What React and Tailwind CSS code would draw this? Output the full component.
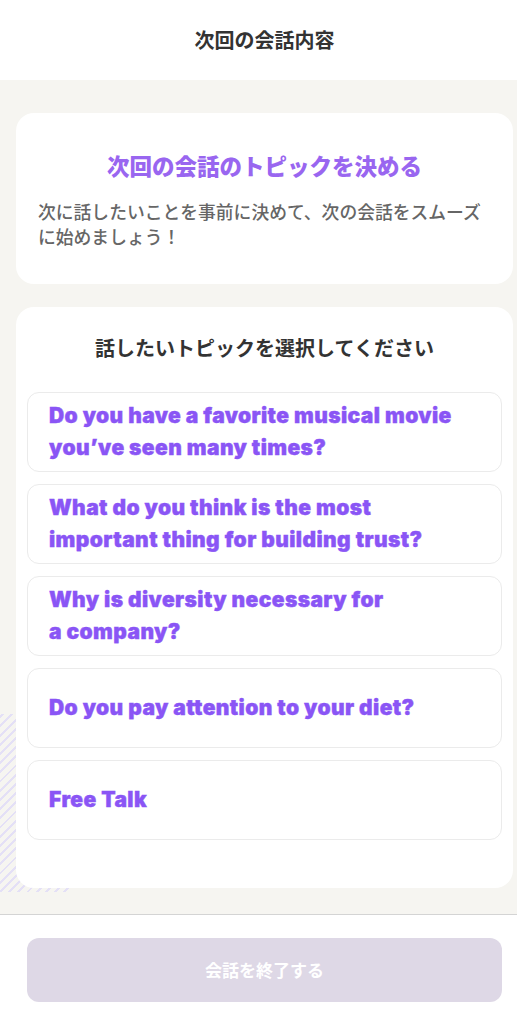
import React from 'react';

const topics = [
  ['Do you have a favorite musical movie', 'you’ve seen many times?'],
  ['What do you think is the most', 'important thing for building trust?'],
  ['Why is diversity necessary for', 'a company?'],
  ['Do you pay attention to your diet?'],
  ['Free Talk'],
];

const jp = { fontFamily: '"Noto Sans CJK JP", "Noto Sans", sans-serif' };
const en = { fontFamily: 'Inter, "Noto Sans CJK JP", sans-serif' };

const TopicItem = ({ lines }) => (
  <button
    type="button"
    className="h-[80px] w-full rounded-[12px] border border-[#ebebeb] bg-white px-[21px] text-left"
  >
    {lines.map((line, i) => (
      <span
        key={i}
        className="block text-[21px] font-black leading-[32px] tracking-[0.4px] text-[#8a55f5] [-webkit-text-stroke:0.4px_#8a55f5]"
        style={en}
      >
        {line}
      </span>
    ))}
  </button>
);

export default function App() {
  return (
    <div className="w-[517px] overflow-hidden bg-white" style={jp}>
      {/* screen is a little wider than the capture, right edge is cut off */}
      <div className="flex min-h-[1024px] w-[529px] flex-col bg-white">
        <header className="flex h-[80px] items-center justify-center bg-white">
          <h1 className="text-[20px] font-bold text-[#333]">次回の会話内容</h1>
        </header>

        <main className="relative flex-1 overflow-hidden bg-[#f6f5f1] px-[16px] pt-[33px] pb-[26px]">
          <div className="absolute left-[-20px] top-[634px] h-[178px] w-[92px] bg-[repeating-linear-gradient(-45deg,transparent_0px,transparent_4.5px,#e4e0f6_4.5px,#e4e0f6_6.5px)]" />

          <section className="relative rounded-[18px] bg-white px-[22px] pt-[36px] pb-[35px]">
            <h2 className="text-center text-[22.5px] font-black leading-[32px] text-[#9966f0]">
              次回の会話のトピックを決める
            </h2>
            <p className="mt-[18px] text-[17.8px] font-medium leading-[25px] text-[#666]">
              次に話したいことを事前に決めて、次の会話をスムーズに始めましょう！
            </p>
          </section>

          <section className="relative mt-[23px] rounded-[18px] bg-white px-[11px] pt-[26px] pb-[48px]">
            <h3 className="text-center text-[20px] font-bold leading-[30px] text-[#333]">
              話したいトピックを選択してください
            </h3>
            <div className="mt-[29px] flex flex-col gap-[12px]">
              {topics.map((t, i) => (
                <TopicItem key={i} lines={t} />
              ))}
            </div>
          </section>
        </main>

        <footer className="border-t border-[#d4d4d4] bg-white px-[27px] pt-[23px] pb-[22px]">
          <button
            type="button"
            className="h-[64px] w-full rounded-[12px] bg-[#ded8e6] text-[17px] font-bold text-white"
          >
            会話を終了する
          </button>
        </footer>
      </div>
    </div>
  );
}
